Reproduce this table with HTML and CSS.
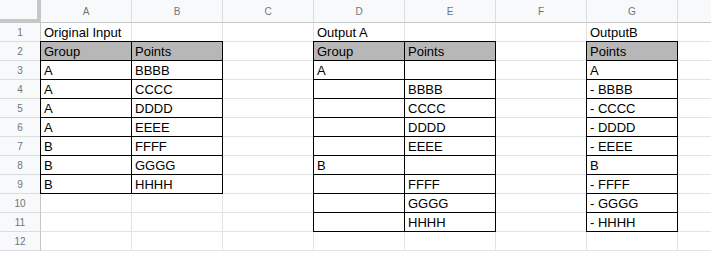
FILE: index.html
```html
<!DOCTYPE html>
<html>
<head>
<meta charset="utf-8">
<link rel="stylesheet" href="styles.css">
</head>
<body>
<div class="sheet">
  <div class="corner"></div>
  <div class="ch">A</div><div class="ch">B</div><div class="ch">C</div><div class="ch">D</div><div class="ch">E</div><div class="ch">F</div><div class="ch">G</div><div class="ch last"></div>

  <div class="rh">1</div>
  <div class="c">Original Input</div><div class="c"></div><div class="c"></div><div class="c">Output A</div><div class="c"></div><div class="c"></div><div class="c">OutputB</div><div class="c last"></div>

  <div class="rh">2</div>
  <div class="c b hd">Group</div><div class="c b hd">Points</div><div class="c"></div><div class="c b hd">Group</div><div class="c b hd">Points</div><div class="c"></div><div class="c b hd">Points</div><div class="c last"></div>

  <div class="rh">3</div>
  <div class="c b">A</div><div class="c b">BBBB</div><div class="c"></div><div class="c b">A</div><div class="c b"></div><div class="c"></div><div class="c b">A</div><div class="c last"></div>

  <div class="rh">4</div>
  <div class="c b">A</div><div class="c b">CCCC</div><div class="c"></div><div class="c b"></div><div class="c b">BBBB</div><div class="c"></div><div class="c b">- BBBB</div><div class="c last"></div>

  <div class="rh">5</div>
  <div class="c b">A</div><div class="c b">DDDD</div><div class="c"></div><div class="c b"></div><div class="c b">CCCC</div><div class="c"></div><div class="c b">- CCCC</div><div class="c last"></div>

  <div class="rh">6</div>
  <div class="c b">A</div><div class="c b">EEEE</div><div class="c"></div><div class="c b"></div><div class="c b">DDDD</div><div class="c"></div><div class="c b">- DDDD</div><div class="c last"></div>

  <div class="rh">7</div>
  <div class="c b">B</div><div class="c b">FFFF</div><div class="c"></div><div class="c b"></div><div class="c b">EEEE</div><div class="c"></div><div class="c b">- EEEE</div><div class="c last"></div>

  <div class="rh">8</div>
  <div class="c b">B</div><div class="c b">GGGG</div><div class="c"></div><div class="c b">B</div><div class="c b"></div><div class="c"></div><div class="c b">B</div><div class="c last"></div>

  <div class="rh">9</div>
  <div class="c b">B</div><div class="c b">HHHH</div><div class="c"></div><div class="c b"></div><div class="c b">FFFF</div><div class="c"></div><div class="c b">- FFFF</div><div class="c last"></div>

  <div class="rh">10</div>
  <div class="c"></div><div class="c"></div><div class="c"></div><div class="c b"></div><div class="c b">GGGG</div><div class="c"></div><div class="c b">- GGGG</div><div class="c last"></div>

  <div class="rh">11</div>
  <div class="c"></div><div class="c"></div><div class="c"></div><div class="c b"></div><div class="c b">HHHH</div><div class="c"></div><div class="c b">- HHHH</div><div class="c last"></div>

  <div class="rh">12</div>
  <div class="c"></div><div class="c"></div><div class="c"></div><div class="c"></div><div class="c"></div><div class="c"></div><div class="c"></div><div class="c last"></div>
</div>
</body>
</html>
```

FILE: styles.css
```css
html, body {
  margin: 0;
  padding: 0;
  background: #ffffff;
}

.sheet {
  display: grid;
  grid-template-columns: 41px repeat(7, 91px) 1fr;
  grid-template-rows: 23px repeat(12, 19px);
  width: 711px;
  font-family: "Liberation Sans", Arial, sans-serif;
}

.corner {
  background: #f8f9fa;
  border-right: 4px solid #c4c7c5;
  border-bottom: 4px solid #c4c7c5;
}

.ch {
  background: #f8f9fa;
  border-right: 1px solid #dadce0;
  border-bottom: 1px solid #c4c7c5;
  color: #70757a;
  font-size: 10px;
  display: flex;
  align-items: center;
  justify-content: center;
  padding-top: 1px;
}

.ch.last {
  border-right: none;
}

.rh {
  background: #f8f9fa;
  border-right: 1px solid #c4c7c5;
  border-bottom: 1px solid #dadce0;
  color: #70757a;
  font-size: 10px;
  display: flex;
  align-items: center;
  justify-content: center;
}

.c {
  border-right: 1px solid #e2e3e3;
  border-bottom: 1px solid #e2e3e3;
  font-size: 13px;
  color: #000;
  padding: 1px 3px 0;
  line-height: 18px;
  white-space: nowrap;
  overflow: visible;
}

.c.last {
  border-right: none;
}

.c.b {
  border-right: 1px solid #000;
  border-bottom: 1px solid #000;
  box-shadow: -1px 0 0 #000, 0 -1px 0 #000, -1px -1px 0 #000;
}

.c.hd {
  background: #b7b7b7;
}
```
